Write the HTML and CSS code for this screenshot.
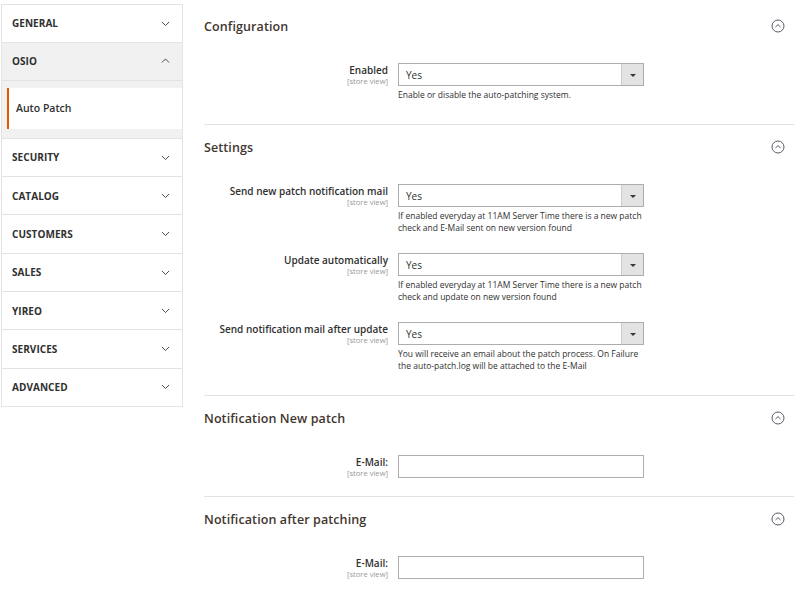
FILE: index.html
```html
<!DOCTYPE html>
<html lang="en">
<head>
<meta charset="utf-8">
<title>Auto Patch Configuration</title>
<link rel="stylesheet" href="styles.css">
</head>
<body>
<div class="page">
  <nav class="sidebar">
    <div class="nav-item"><span>GENERAL</span><svg class="chev" viewBox="0 0 10 6"><polyline points="1,1 5,5 9,1"/></svg></div>
    <div class="nav-item open"><span>OSIO</span><svg class="chev" viewBox="0 0 10 6"><polyline points="1,5 5,1 9,5"/></svg></div>
    <div class="subnav"><div class="sub-item">Auto Patch</div></div>
    <div class="nav-item"><span>SECURITY</span><svg class="chev" viewBox="0 0 10 6"><polyline points="1,1 5,5 9,1"/></svg></div>
    <div class="nav-item"><span>CATALOG</span><svg class="chev" viewBox="0 0 10 6"><polyline points="1,1 5,5 9,1"/></svg></div>
    <div class="nav-item"><span>CUSTOMERS</span><svg class="chev" viewBox="0 0 10 6"><polyline points="1,1 5,5 9,1"/></svg></div>
    <div class="nav-item"><span>SALES</span><svg class="chev" viewBox="0 0 10 6"><polyline points="1,1 5,5 9,1"/></svg></div>
    <div class="nav-item"><span>YIREO</span><svg class="chev" viewBox="0 0 10 6"><polyline points="1,1 5,5 9,1"/></svg></div>
    <div class="nav-item"><span>SERVICES</span><svg class="chev" viewBox="0 0 10 6"><polyline points="1,1 5,5 9,1"/></svg></div>
    <div class="nav-item last"><span>ADVANCED</span><svg class="chev" viewBox="0 0 10 6"><polyline points="1,1 5,5 9,1"/></svg></div>
  </nav>

  <main class="content">
    <section class="section">
      <header class="section-head">
        <h2>Configuration</h2>
        <svg class="collapse" viewBox="0 0 14 14"><circle cx="7" cy="7" r="6"/><polyline points="4.5,8 7,5.6 9.5,8"/></svg>
      </header>
      <div class="fields">
        <div class="field">
          <div class="label"><span class="label-text">Enabled</span><span class="scope">[store view]</span></div>
          <div class="control">
            <div class="select"><span class="value">Yes</span><span class="arrow"></span></div>
            <p class="note">Enable or disable the auto-patching system.</p>
          </div>
        </div>
      </div>
    </section>

    <section class="section">
      <header class="section-head">
        <h2>Settings</h2>
        <svg class="collapse" viewBox="0 0 14 14"><circle cx="7" cy="7" r="6"/><polyline points="4.5,8 7,5.6 9.5,8"/></svg>
      </header>
      <div class="fields">
        <div class="field">
          <div class="label"><span class="label-text">Send new patch notification mail</span><span class="scope">[store view]</span></div>
          <div class="control">
            <div class="select"><span class="value">Yes</span><span class="arrow"></span></div>
            <p class="note">If enabled everyday at 11AM Server Time there is a new patch check and E-Mail sent on new version found</p>
          </div>
        </div>
        <div class="field">
          <div class="label"><span class="label-text">Update automatically</span><span class="scope">[store view]</span></div>
          <div class="control">
            <div class="select"><span class="value">Yes</span><span class="arrow"></span></div>
            <p class="note">If enabled everyday at 11AM Server Time there is a new patch check and update on new version found</p>
          </div>
        </div>
        <div class="field">
          <div class="label"><span class="label-text">Send notification mail after update</span><span class="scope">[store view]</span></div>
          <div class="control">
            <div class="select"><span class="value">Yes</span><span class="arrow"></span></div>
            <p class="note">You will receive an email about the patch process. On Failure the auto-patch.log will be attached to the E-Mail</p>
          </div>
        </div>
      </div>
    </section>

    <section class="section">
      <header class="section-head">
        <h2>Notification New patch</h2>
        <svg class="collapse" viewBox="0 0 14 14"><circle cx="7" cy="7" r="6"/><polyline points="4.5,8 7,5.6 9.5,8"/></svg>
      </header>
      <div class="fields">
        <div class="field">
          <div class="label"><span class="label-text">E-Mail:</span><span class="scope">[store view]</span></div>
          <div class="control"><div class="input"></div></div>
        </div>
      </div>
    </section>

    <section class="section no-border">
      <header class="section-head">
        <h2>Notification after patching</h2>
        <svg class="collapse" viewBox="0 0 14 14"><circle cx="7" cy="7" r="6"/><polyline points="4.5,8 7,5.6 9.5,8"/></svg>
      </header>
      <div class="fields">
        <div class="field">
          <div class="label"><span class="label-text">E-Mail:</span><span class="scope">[store view]</span></div>
          <div class="control"><div class="input"></div></div>
        </div>
      </div>
    </section>
  </main>
</div>
</body>
</html>
```

FILE: styles.css
```css
* { box-sizing: border-box; }

html, body {
  margin: 0;
  padding: 0;
  background: #ffffff;
  font-family: "Open Sans", "Liberation Sans", sans-serif;
  color: #303030;
}

.page {
  display: flex;
  align-items: flex-start;
  width: 800px;
}

/* Sidebar */
.sidebar {
  width: 182px;
  margin: 4px 0 0 1px;
  border: 1px solid #e3e3e3;
  border-bottom: none;
  display: flex;
  flex-direction: column;
}

.nav-item {
  height: 38.3px;
  border-bottom: 1px solid #e3e3e3;
  display: flex;
  align-items: center;
  justify-content: space-between;
  padding: 0 12px 0 10px;
  font-size: 10px;
  font-weight: 700;
  color: #303030;
  background: #ffffff;
  letter-spacing: 0.05px;
}

.nav-item:first-child { height: 37.5px; }

.nav-item.open {
  background: #f1f1f1;
  border-bottom: 1px solid #e3e3e3;
}

.chev {
  width: 9px;
  height: 5.5px;
  fill: none;
  stroke: #41362f;
  stroke-width: 1;
}

.subnav {
  background: #f1f1f1;
  padding: 7px 0 9px 5px;
  border-bottom: 1px solid #e3e3e3;
}

.sub-item {
  height: 41px;
  background: #ffffff;
  border-left: 2px solid #eb5202;
  display: flex;
  align-items: center;
  padding-left: 7px;
  font-size: 10.5px;
  font-weight: 600;
  color: #303030;
}

/* Content */
.content {
  margin-left: 21px;
  width: 590px;
  padding-top: 4px;
}

.section {
  border-bottom: 1px solid #e3e3e3;
}

.section.no-border { border-bottom: none; }

.section-head {
  height: 44px;
  display: flex;
  align-items: center;
  justify-content: space-between;
  padding-right: 9px;
}

.section-head h2 {
  margin: 0;
  font-size: 12.5px;
  font-weight: 600;
  color: #41362f;
  letter-spacing: 0.1px;
}

.collapse {
  width: 14px;
  height: 14px;
  fill: none;
  stroke: #5a5a6a;
  stroke-width: 1;
}

.fields {
  padding: 15px 0 18px;
  display: flex;
  flex-direction: column;
  gap: 14px;
}

.field {
  display: flex;
  gap: 10px;
}

.label {
  width: 184px;
  display: flex;
  flex-direction: column;
  align-items: flex-end;
  text-align: right;
  padding-top: 1px;
}

.label-text {
  font-size: 10px;
  font-weight: 600;
  line-height: 13px;
  color: #303030;
}

.scope {
  font-size: 7.6px;
  line-height: 9px;
  color: #999999;
}

.control {
  width: 246px;
}

.select {
  height: 23px;
  border: 1px solid #adadad;
  display: flex;
  align-items: center;
  justify-content: space-between;
  background: #ffffff;
}

.select .value {
  padding-left: 7px;
  font-size: 10px;
  color: #303030;
}

.select .arrow {
  width: 22px;
  height: 100%;
  background: #e3e3e3;
  border-left: 1px solid #cccccc;
  position: relative;
}

.select .arrow::after {
  content: "";
  position: absolute;
  left: 50%;
  top: 50%;
  margin: -1px 0 0 -3px;
  border-left: 3px solid transparent;
  border-right: 3px solid transparent;
  border-top: 3px solid #41362f;
}

.input {
  height: 23px;
  border: 1px solid #adadad;
  background: #ffffff;
}

.note {
  margin: 3px 0 5px;
  font-size: 8.5px;
  line-height: 12px;
  color: #303030;
}
```
